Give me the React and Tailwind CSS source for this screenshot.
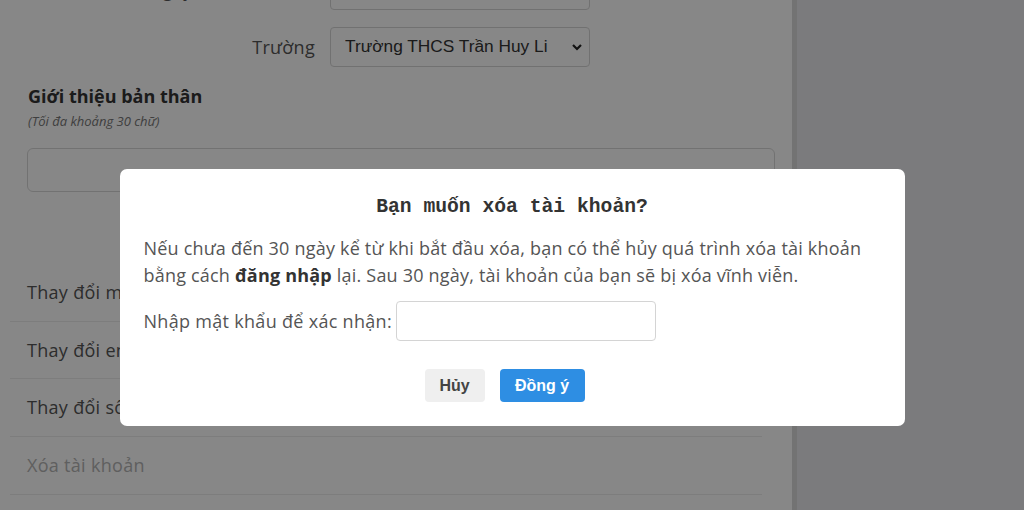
const sans = { fontFamily: '"Open Sans", "Noto Sans", sans-serif' };

const FormRow = ({ label, value }) => (
  <div className="flex items-center">
    <div className="w-[330px] pr-[15px] text-right text-[18px] tracking-[0.3px] text-[#555] whitespace-nowrap">{label}</div>
    <div className="w-[260px] h-[40px] border border-[#d6d6d6] rounded-[4px] flex items-center justify-between pl-[14px] pr-[6px] bg-white">
      <span className="text-[17.3px] text-[#333] whitespace-nowrap overflow-hidden" style={{ fontFamily: '"Liberation Sans", Arial, sans-serif' }}>
        {value}
      </span>
      <svg width="12" height="12" viewBox="0 0 12 12" className="shrink-0">
        <path d="M2 4l4 4 4-4" fill="none" stroke="#222" strokeWidth="2.2" />
      </svg>
    </div>
  </div>
);

const ListItem = ({ children, muted }) => (
  <div className={`h-[57.7px] flex items-center pl-[17px] border-b border-[#ececec] text-[18px] tracking-[0.3px] ${muted ? "text-[#b4b4b4]" : "text-[#555]"}`}>
    {children}
  </div>
);

const DeleteModal = () => (
  <div className="fixed inset-0 bg-black/[0.47] flex justify-center items-start pt-[169px]">
    <div className="w-[785px] bg-white rounded-[7px] px-6 pt-[24px] pb-[24px]" style={sans}>
      <h3
        className="text-center text-[19.7px] font-bold text-[#333] leading-[28px]"
        style={{ fontFamily: '"Liberation Mono", "DejaVu Sans Mono", monospace' }}
      >
        Bạn muốn xóa tài khoản?
      </h3>
      <p className="mt-[14px] text-[18px] tracking-[0.2px] leading-[27px] text-[#555]">
        Nếu chưa đến 30 ngày kể từ khi bắt đầu xóa, bạn có thể hủy quá trình xóa tài khoản bằng cách{" "}
        <b className="text-[#333]">đăng nhập</b> lại. Sau 30 ngày, tài khoản của bạn sẽ bị xóa vĩnh viễn.
      </p>
      <div className="mt-[12px] flex items-center gap-[4px]">
        <span className="text-[18px] tracking-[0.3px] text-[#555]">Nhập mật khẩu để xác nhận:</span>
        <input type="password" className="w-[260px] h-[40px] border border-[#d4d4d4] rounded-[4px] outline-none px-2" />
      </div>
      <div
        className="mt-[28px] flex justify-center gap-[15px] pr-[15px]"
        style={{ fontFamily: '"Liberation Sans", Arial, sans-serif' }}
      >
        <button className="w-[60px] h-[33px] rounded-[4px] bg-[#efefef] text-[#444] text-[16px] font-bold">Hủy</button>
        <button className="w-[85px] h-[33px] rounded-[4px] bg-[#2e8ee3] text-white text-[16px] font-bold">Đồng ý</button>
      </div>
    </div>
  </div>
);

export default function App() {
  return (
    <div className="w-[1024px] h-[510px] overflow-hidden bg-[#e8e9ec] flex" style={sans}>
      <div className="w-[797px] h-full bg-white border-r-[5px] border-[#dadada] overflow-hidden">
        <div className="-mt-[30px] flex flex-col gap-[17px]">
          <FormRow label="Ngày sinh (dự kiến)" value="" />
          <FormRow label="Trường" value="Trường THCS Trần Huy Li" />
        </div>
        <div className="pl-[28px] mt-[16px]">
          <div className="text-[18px] font-bold text-[#333] leading-[26px]">Giới thiệu bản thân</div>
          <div className="text-[13px] italic text-[#777] leading-[20px] mt-[2px]">(Tối đa khoảng 30 chữ)</div>
        </div>
        <div className="ml-[27px] mt-[17px] w-[748px] h-[44px] border border-[#d8d8d8] rounded-[6px]" />
        <div className="mt-[72px] ml-[10px] w-[752px]">
          <ListItem>Thay đổi mật khẩu</ListItem>
          <ListItem>Thay đổi email</ListItem>
          <ListItem>Thay đổi số điện thoại</ListItem>
          <ListItem muted>Xóa tài khoản</ListItem>
        </div>
      </div>
      <DeleteModal />
    </div>
  );
}
